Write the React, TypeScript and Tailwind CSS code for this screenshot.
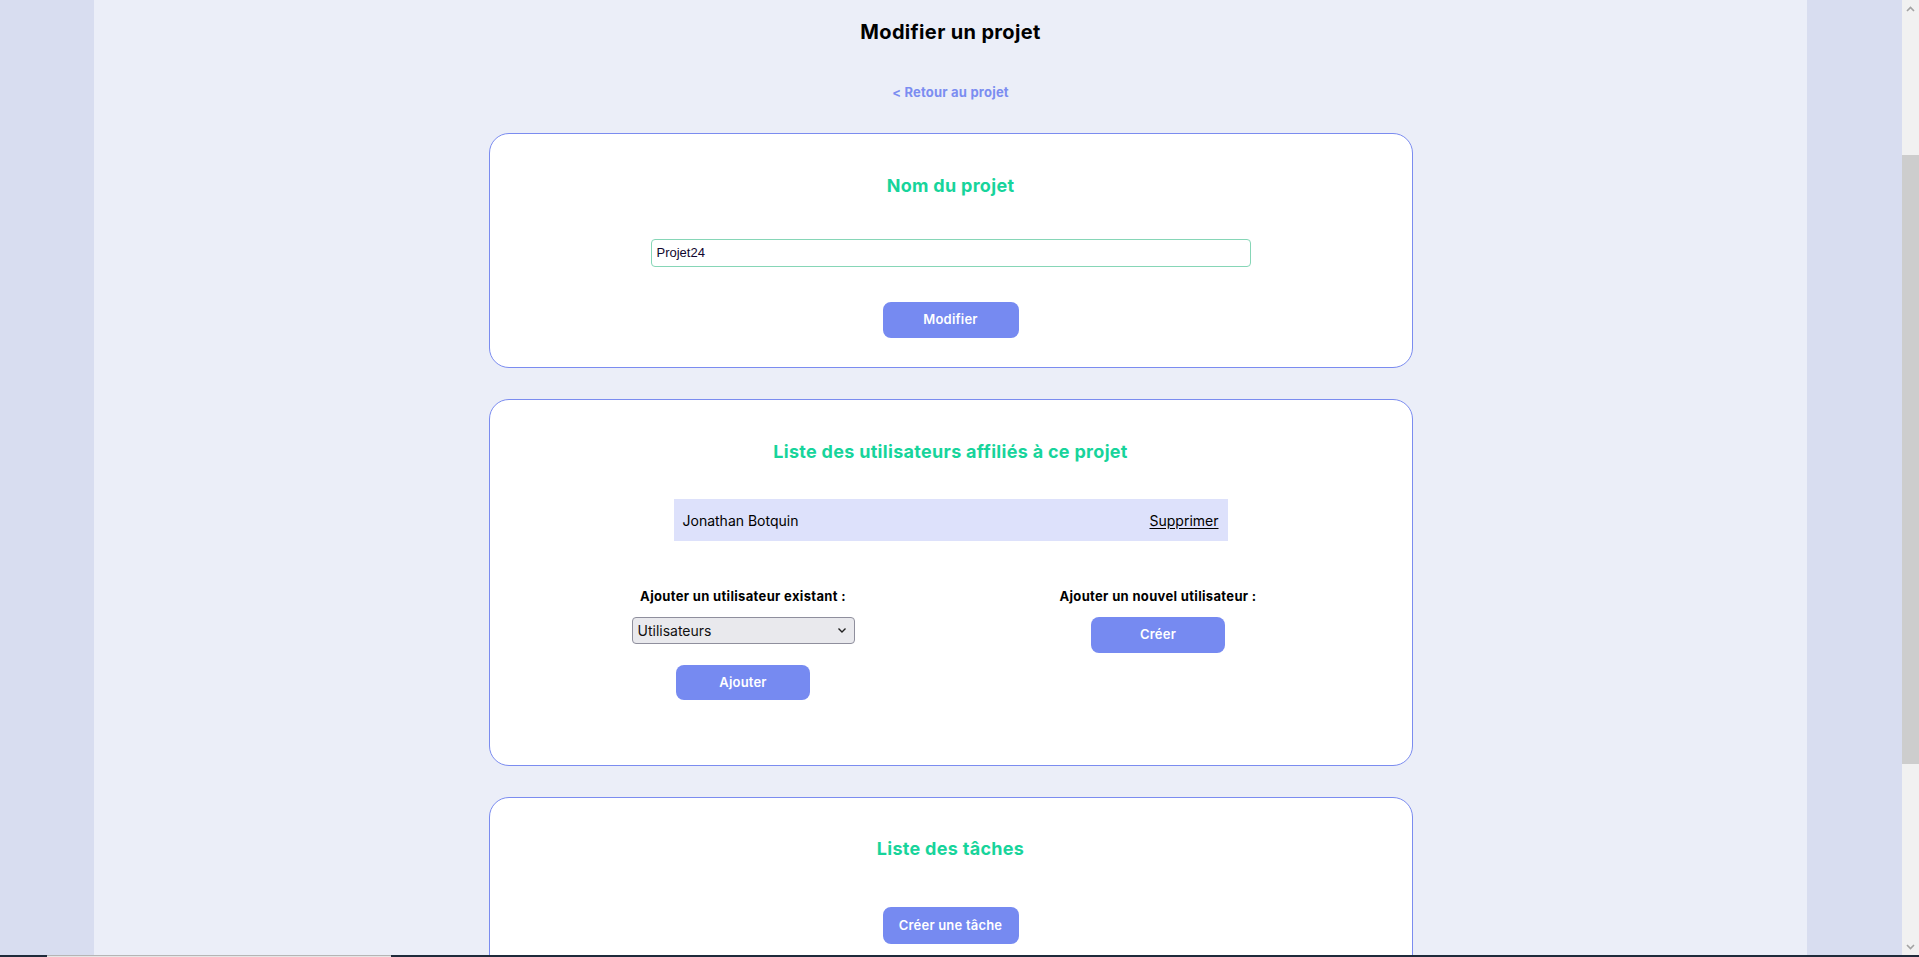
import React from "react";

function Btn({ children, className = "" }: { children: React.ReactNode; className?: string }) {
  return (
    <button
      className={`flex items-center justify-center rounded-[8px] bg-[#768af1] text-[13px] font-semibold tracking-[0.2px] text-white ${className}`}
    >
      {children}
    </button>
  );
}

function Card({ children, className = "" }: { children: React.ReactNode; className?: string }) {
  return (
    <section
      className={`flex w-[924px] shrink-0 flex-col items-center rounded-[20px] border border-[#7b8cf0] bg-white ${className}`}
    >
      {children}
    </section>
  );
}

function Scrollbar() {
  return (
    <div className="flex w-[17px] flex-col bg-[#f1f1f1]">
      <div className="flex h-[17px] items-center justify-center">
        <svg width="9" height="6" viewBox="0 0 9 6">
          <path d="M1 5 L4.5 1.5 L8 5" fill="none" stroke="#a3a3a3" strokeWidth="1.6" />
        </svg>
      </div>
      <div className="h-[138px]" />
      <div className="h-[609px] bg-[#cdcdcd]" />
      <div className="flex-1" />
      <div className="flex h-[17px] items-center justify-center">
        <svg width="9" height="6" viewBox="0 0 9 6">
          <path d="M1 1 L4.5 4.5 L8 1" fill="none" stroke="#a3a3a3" strokeWidth="1.6" />
        </svg>
      </div>
    </div>
  );
}

export default function App() {
  return (
    <div className="flex h-[957px] w-[1919px] flex-col overflow-hidden font-['Inter',sans-serif]">
      <div className="flex min-h-0 flex-1">
        <div className="w-[94px] bg-[#d8ddf0]" />
        <main className="flex min-w-0 flex-1 flex-col items-center overflow-hidden bg-[#ebeef8]">
          <h1 className="pt-[17px] text-[20px] font-bold leading-[30px] tracking-[0.35px] text-black">
            Modifier un projet
          </h1>
          <a className="mt-[35px] text-[13px] font-bold leading-[20px] tracking-[0.2px] text-[#7b8df1]">
            &lt; Retour au projet
          </a>

          <Card className="mt-[31px] h-[235px] pt-[38px]">
            <h2 className="text-[18px] font-bold leading-[27px] tracking-[0.3px] text-[#17d49b]">Nom du projet</h2>
            <div className="mt-[40px] flex h-[28px] w-[600px] items-center rounded-[4px] border border-[#86d6b7] px-[5px] font-['Liberation_Sans',Arial,sans-serif] text-[13px] text-[#10062e]">
              Projet24
            </div>
            <Btn className="mt-[35px] h-[36px] w-[136px]">Modifier</Btn>
          </Card>

          <Card className="mt-[31px] h-[367px] pt-[38px]">
            <h2 className="text-[18px] font-bold leading-[27px] tracking-[0.3px] text-[#17d49b]">
              Liste des utilisateurs affiliés à ce projet
            </h2>
            <div className="mt-[34px] flex h-[42px] w-[554px] items-center justify-between bg-[#dde1fb] px-[9px] text-[14px] text-black">
              <span>Jonathan Botquin</span>
              <span className="underline underline-offset-2">Supprimer</span>
            </div>
            <div className="mt-[45px] grid w-[830px] grid-cols-2">
              <div className="flex flex-col items-center">
                <div className="text-[13px] font-bold leading-[20px] tracking-[0.33px] text-black">
                  Ajouter un utilisateur existant :
                </div>
                <div className="mt-[11px] flex h-[27px] w-[223px] items-center justify-between rounded-[4px] border border-[#8f8f9d] bg-[#e9e9ed] pl-[5px] pr-[7px] text-[14px] text-[#111]">
                  <span>Utilisateurs</span>
                  <svg width="10" height="7" viewBox="0 0 10 7">
                    <path d="M1.5 1.5 L5 5 L8.5 1.5" fill="none" stroke="#222" strokeWidth="1.4" />
                  </svg>
                </div>
                <Btn className="mt-[21px] h-[35px] w-[134px]">Ajouter</Btn>
              </div>
              <div className="flex flex-col items-center">
                <div className="text-[13px] font-bold leading-[20px] tracking-[0.33px] text-black">
                  Ajouter un nouvel utilisateur :
                </div>
                <Btn className="mt-[11px] h-[36px] w-[134px]">Créer</Btn>
              </div>
            </div>
          </Card>

          <Card className="mt-[31px] h-[400px] pt-[37px]">
            <h2 className="text-[18px] font-bold leading-[27px] tracking-[0.3px] text-[#17d49b]">Liste des tâches</h2>
            <Btn className="mt-[45px] h-[37px] w-[136px]">Créer une tâche</Btn>
          </Card>
        </main>
        <div className="w-[95px] bg-[#d8ddf0]" />
        <Scrollbar />
      </div>
      <div className="flex h-[2px] bg-[#1f2b3b]">
        <div className="w-[47px]" />
        <div className="w-[344px] border-t border-[#b5b5b5] bg-[#e6e6e6]" />
      </div>
    </div>
  );
}
